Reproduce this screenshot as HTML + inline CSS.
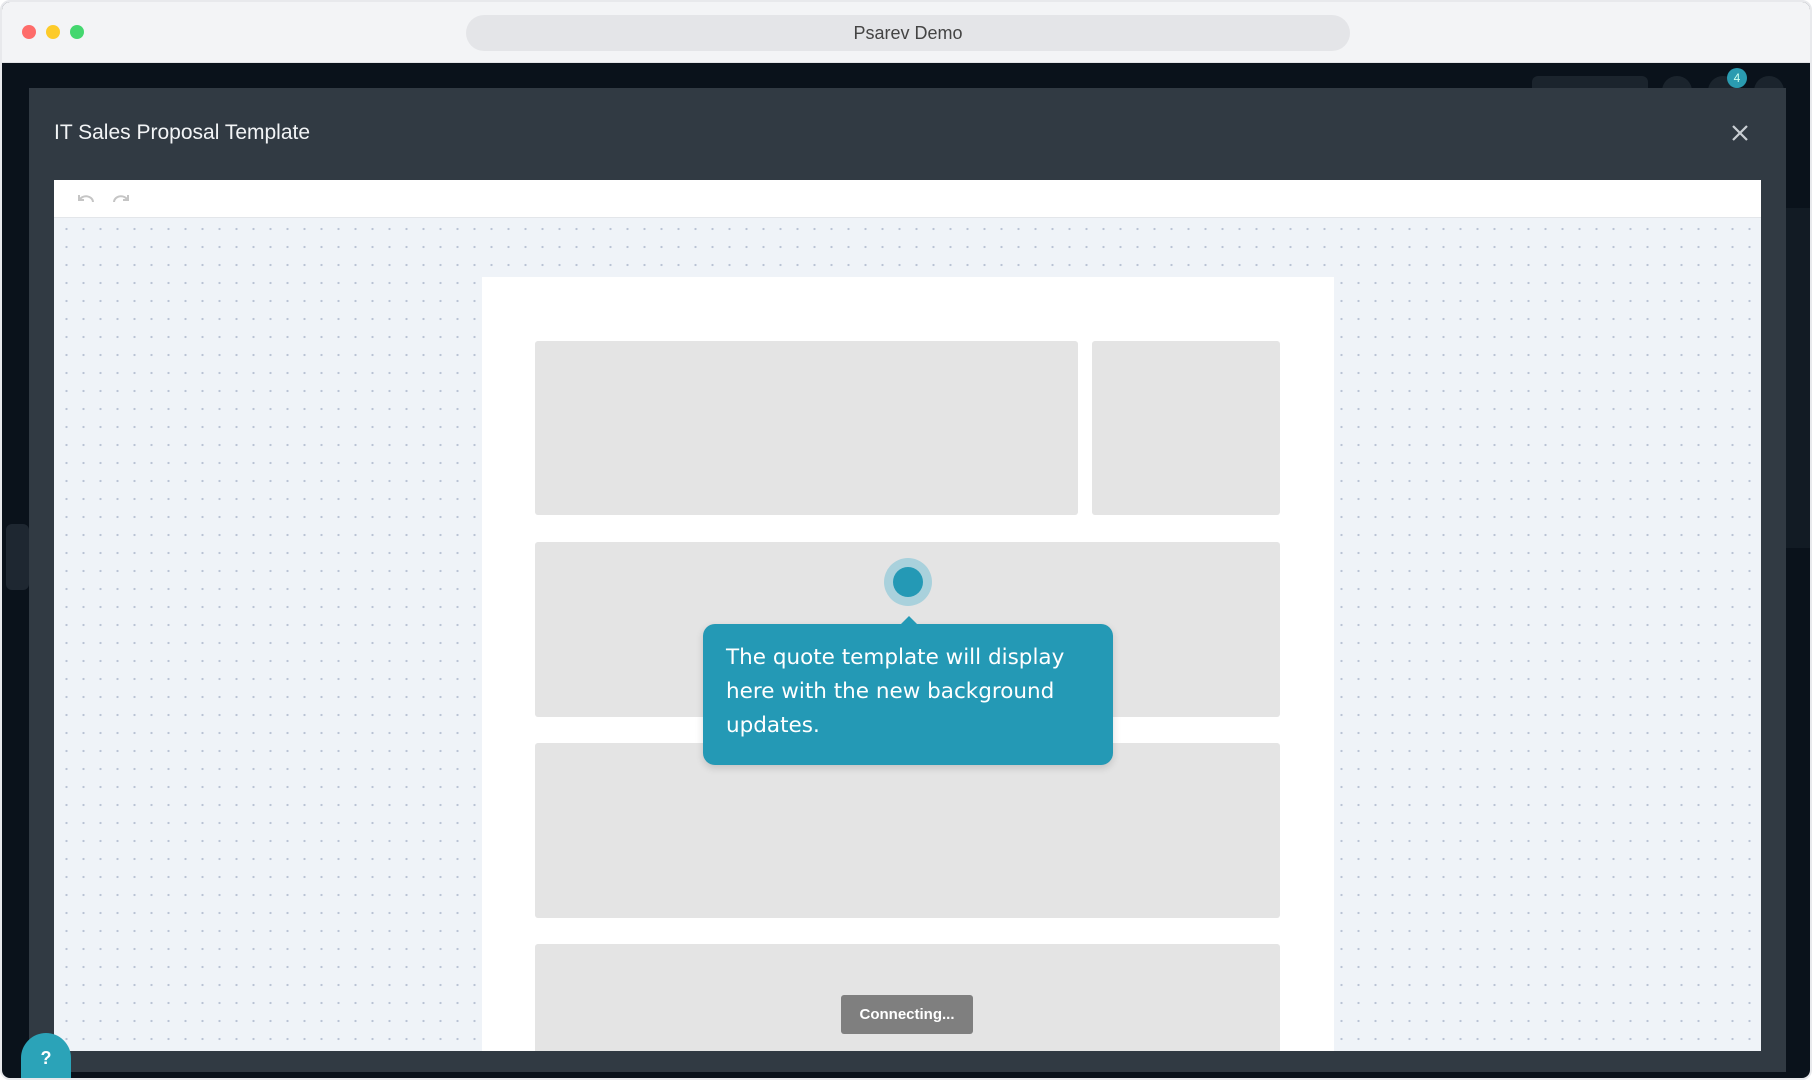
<!DOCTYPE html>
<html><head><meta charset="utf-8"><style>
*{margin:0;padding:0;box-sizing:border-box}
html,body{width:1812px;height:1080px;overflow:hidden;background:#fff;font-family:"Liberation Sans",sans-serif}
.win{position:absolute;left:0;top:0;width:1812px;height:1080px;background:#0a121b;border-radius:10px;overflow:hidden;border:2px solid #e8e9ec}
.tb{position:absolute;left:0;top:0;width:100%;height:61px;background:#f3f4f6;border-bottom:1px solid #e2e3e6}
.dot{position:absolute;top:23px;width:14px;height:14px;border-radius:50%}
.url{position:absolute;left:464px;top:13px;width:884px;height:36px;border-radius:18px;background:#e4e5e8;text-align:center;line-height:36px;font-size:18px;color:#444}
.modal{position:absolute;left:27px;top:86px;width:1757px;height:984px;background:#313a43}
.title{position:absolute;left:25px;top:33px;font-size:21px;color:#f2f4f6}
.close{position:absolute;left:1700px;top:34px}
.content{position:absolute;left:25px;top:92px;width:1707px;height:871px;background:#fff;overflow:hidden}
.tool{height:38px;border-bottom:1px solid #e3e6ea;background:#fff;position:relative}
.canvas{position:absolute;top:38px;left:0;right:0;bottom:0;background-color:#eff3f8;background-image:radial-gradient(circle,#b9c3d4 1px,transparent 1.3px);background-size:17px 18px;background-position:4px 2px}
.paper{position:absolute;left:428px;top:59px;width:852px;height:900px;background:#fff}
.box{position:absolute;background:#e4e4e4;border-radius:3px}
.tip{position:absolute;left:701px;top:622px;width:410px;height:141px;background:#2499b5;border-radius:12px;color:#fff;line-height:34px;padding:17px 23px;box-shadow:0 3px 8px rgba(0,0,0,.15);font-family:"DejaVu Sans","Liberation Sans",sans-serif;font-size:21.5px}
.tip:before{content:"";position:absolute;left:198px;top:-8px;border:8px solid transparent;border-top:0;border-bottom-color:#2499b5}
</style></head><body>
<div class="win">
<div class="tb">
<div class="dot" style="left:20px;background:#fe6c6a"></div>
<div class="dot" style="left:44px;background:#fdcb2a"></div>
<div class="dot" style="left:68px;background:#44d76f"></div>
<div class="url">Psarev Demo</div>
</div>
<div style="position:absolute;left:1530px;top:74px;width:116px;height:28px;border-radius:6px;background:#1b242d"></div>
<div style="position:absolute;left:1660px;top:74px;width:30px;height:30px;border-radius:50%;background:#1b242d"></div>
<div style="position:absolute;left:1706px;top:74px;width:30px;height:30px;border-radius:50%;background:#1b242d"></div>
<div style="position:absolute;left:1752px;top:74px;width:30px;height:30px;border-radius:50%;background:#1b242d"></div>
<div style="position:absolute;left:1725px;top:66px;width:20px;height:20px;border-radius:50%;background:#2a9bb0;color:#cfe;font-size:12px;text-align:center;line-height:20px">4</div>
<div style="position:absolute;left:1784px;top:206px;width:28px;height:340px;background:#121b24"></div>
<div style="position:absolute;left:4px;top:522px;width:23px;height:66px;border-radius:6px;background:#1e2731"></div>
<div class="modal">
<div class="title">IT Sales Proposal Template</div>
<svg class="close" width="22" height="22" viewBox="0 0 22 22"><path d="M4 4L18 18M18 4L4 18" stroke="#c9ced3" stroke-width="2.2"/></svg>
<div class="content">
<div class="tool">
<svg style="position:absolute;left:22px;top:12px" width="20" height="14" viewBox="0 0 20 14"><path d="M3 3v5h5M3.5 8A7 6 0 0 1 17 10" fill="none" stroke="#c5c5c5" stroke-width="2"/></svg>
<svg style="position:absolute;left:57px;top:12px" width="20" height="14" viewBox="0 0 20 14"><path d="M17 3v5h-5M16.5 8A7 6 0 0 0 3 10" fill="none" stroke="#c5c5c5" stroke-width="2"/></svg>
</div>
<div class="canvas">
<div class="paper">
<div class="box" style="left:53px;top:64px;width:543px;height:174px"></div>
<div class="box" style="left:610px;top:64px;width:188px;height:174px"></div>
<div class="box" style="left:53px;top:265px;width:745px;height:175px"></div>
<div class="box" style="left:53px;top:466px;width:745px;height:175px"></div>
<div class="box" style="left:53px;top:667px;width:745px;height:200px"></div>
</div>
</div>
</div>
</div>
<div style="position:absolute;left:882px;top:556px;width:48px;height:48px;border-radius:50%;background:#a9d1dc"></div>
<div style="position:absolute;left:891px;top:565px;width:30px;height:30px;border-radius:50%;background:#2499b5"></div>
<div class="tip">The quote template will display here with the new background updates.</div>
<div style="position:absolute;left:839px;top:993px;width:132px;height:39px;border-radius:3px;background:#7f7f7f;color:#fff;font-weight:bold;font-size:15px;text-align:center;line-height:39px">Connecting...</div>
<div style="position:absolute;left:19px;top:1031px;width:50px;height:47px;border-radius:25px 25px 0 0;background:#2ba3b8;color:#fff;font-weight:bold;font-size:18px;text-align:center;line-height:50px">?</div>
</div>
</body></html>
